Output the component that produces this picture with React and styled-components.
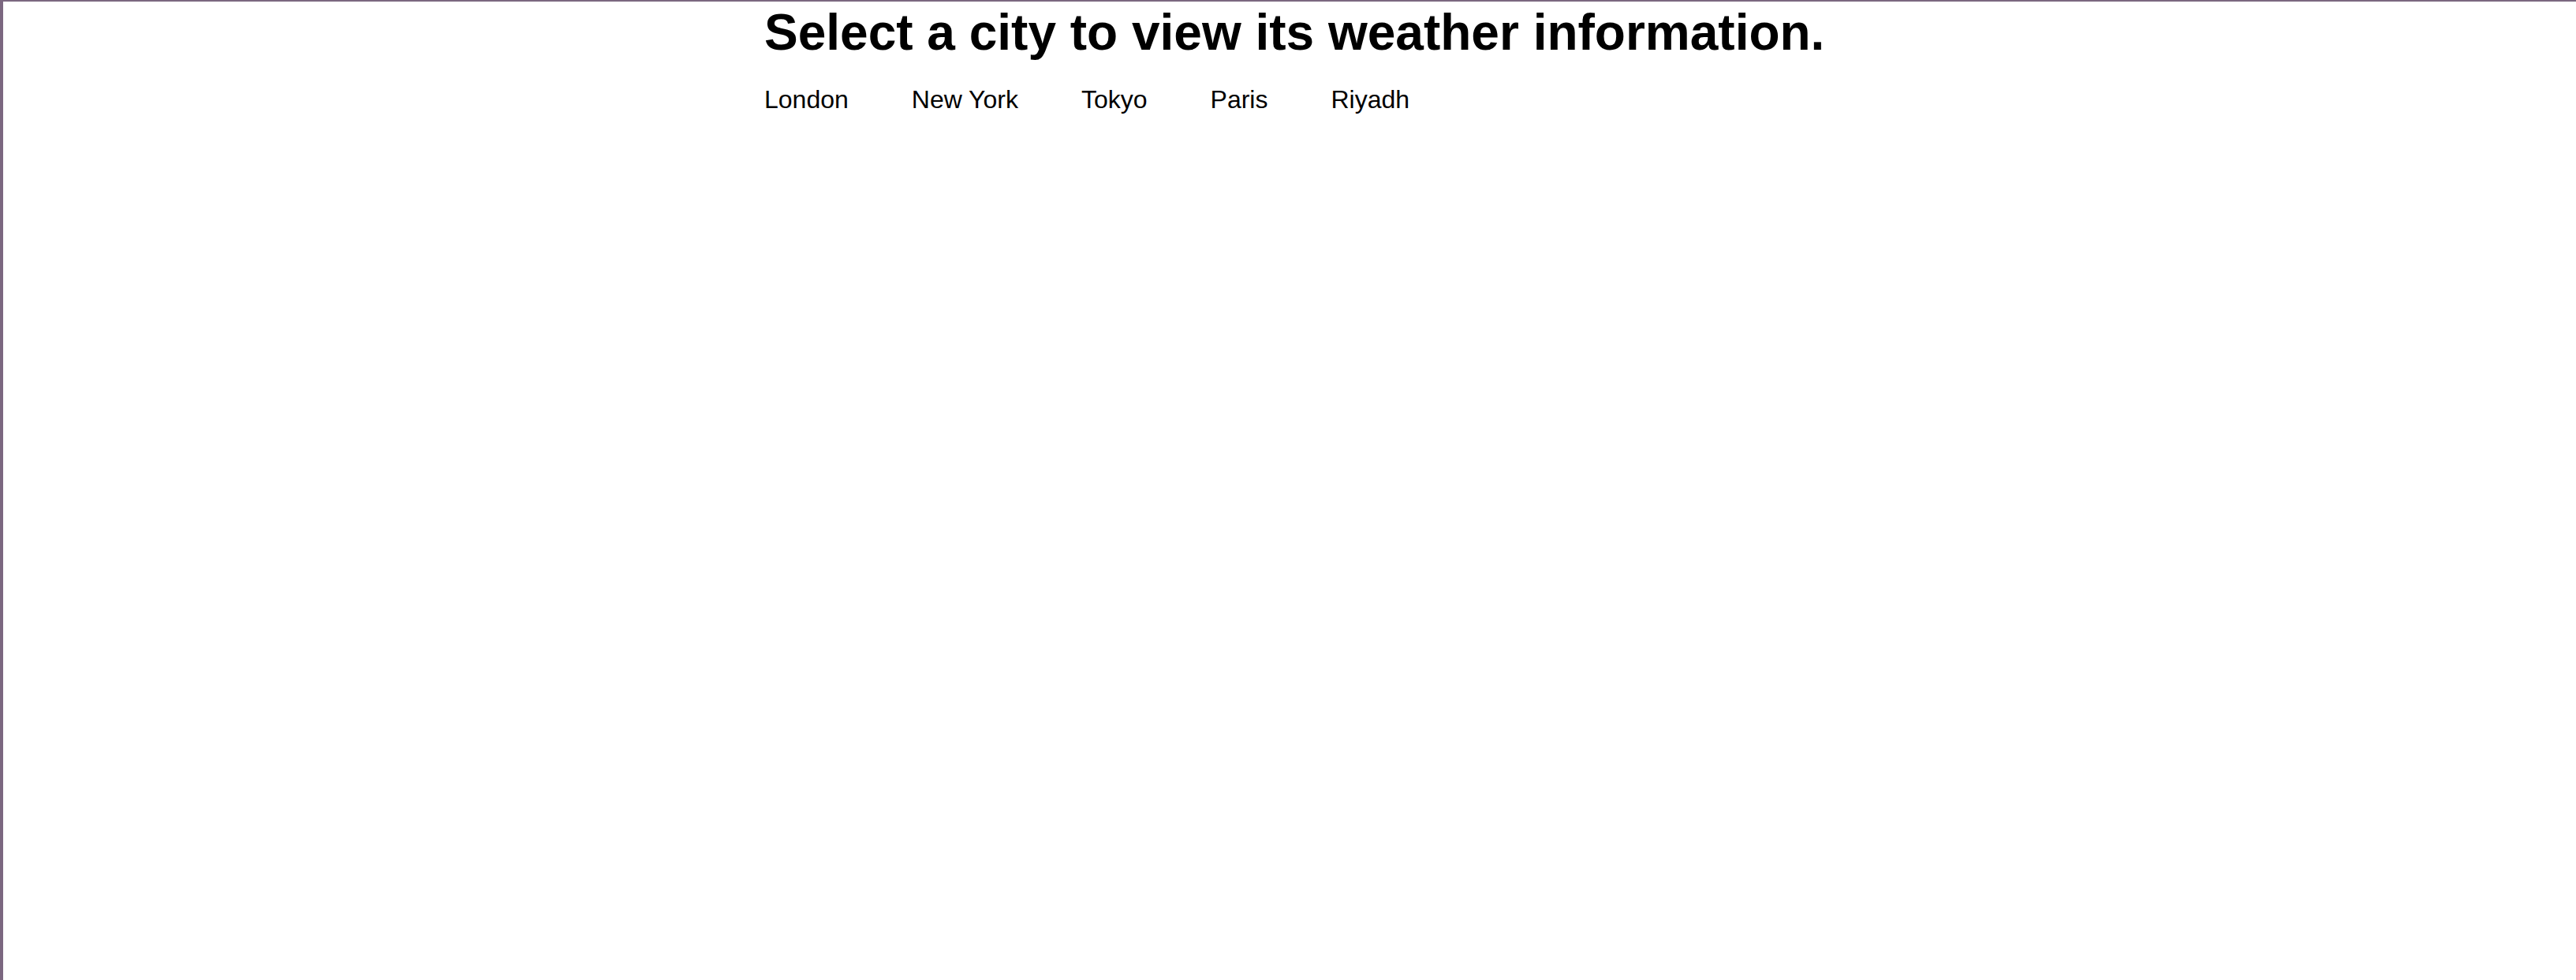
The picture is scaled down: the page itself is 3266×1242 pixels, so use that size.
import React from 'react';
import styled, { createGlobalStyle } from 'styled-components';

const cities = ['London', 'New York', 'Tokyo', 'Paris', 'Riyadh'];

const GlobalStyle = createGlobalStyle`
   html, body {
      margin: 0;
      padding: 0;
      background: #ffffff;
   }
   body {
      font-family: "Liberation Sans", Arial, sans-serif;
      font-size: 32px;
      color: #000;
   }
`;

const Page = styled.div`
   box-sizing: border-box;
   min-height: 100vh;
   border-top: 2px solid #7b6780;
   border-left: 4px solid #7b6780;
   background: #ffffff;
`;

const Container = styled.main`
   width: 1332px;
   margin: 0 auto;
   padding-top: 2px;
`;

const Title = styled.h1`
   margin: 0 0 30px;
   font-size: 64px;
   font-weight: 700;
   white-space: nowrap;
`;

const CityList = styled.ul`
   display: flex;
   gap: 80px;
   list-style: none;
   margin: 0;
   padding: 0;
`;

const City = styled.li`
   font-size: 32px;
   cursor: pointer;
`;

const App = () => {
   return (
      <Page>
         <GlobalStyle />
         <Container>
            <Title>Select a city to view its weather information.</Title>
            <CityList>
               {cities.map((city) => (
                  <City key={city}>{city}</City>
               ))}
            </CityList>
         </Container>
      </Page>
   );
};

export default App;
